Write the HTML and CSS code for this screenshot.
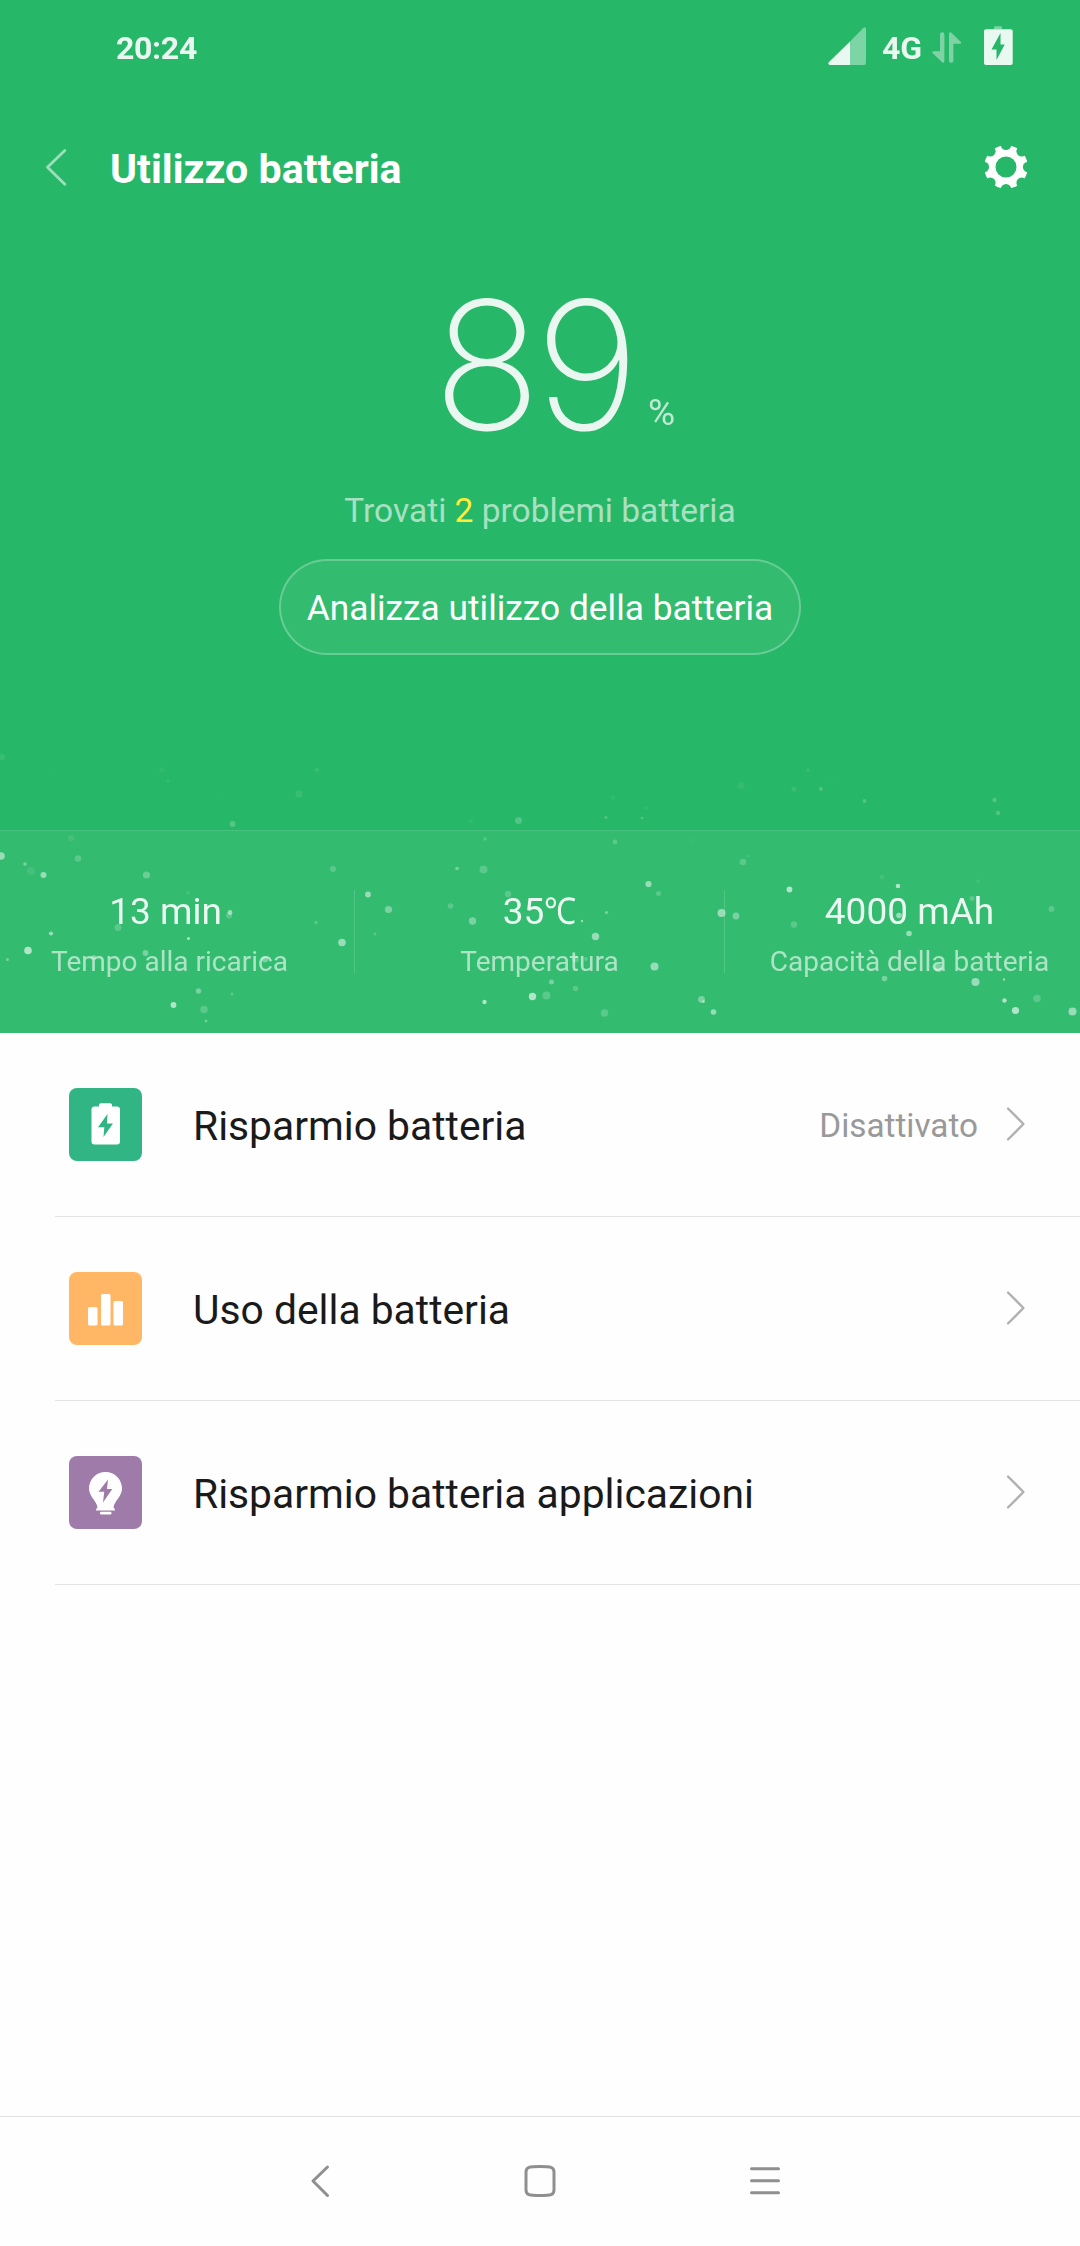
FILE: index.html
```html
<!DOCTYPE html>
<html lang="it">
<head>
<meta charset="utf-8">
<title>Utilizzo batteria</title>
<link rel="stylesheet" href="styles.css">
</head>
<body>
<div class="screen">
  <section class="top">
    <svg class="particles" viewBox="0 740 1080 293" fill="#fff" aria-hidden="true">
      <g opacity=".09">
        <circle cx="2" cy="757" r="3"/><circle cx="162" cy="770" r="3" opacity=".5"/><circle cx="168" cy="781" r="1.5"/><circle cx="317" cy="770" r="2"/><circle cx="299" cy="794" r="3.6"/><circle cx="71" cy="838" r="3"/><circle cx="31" cy="871" r="4"/><circle cx="188" cy="893" r="2"/>
        <circle cx="471" cy="821" r="2.2" opacity=".6"/><circle cx="613" cy="797.500" r="2.5" opacity=".6"/><circle cx="646" cy="808" r="2" opacity=".6"/><circle cx="693" cy="840" r="1.6" opacity=".6"/>
        <circle cx="741" cy="785.500" r="3.500" opacity=".7"/><circle cx="794" cy="789" r="2.600"/><circle cx="808" cy="770" r="1.800"/><circle cx="832" cy="777" r="1.500" opacity=".4"/><circle cx="748" cy="856" r="1.800"/><circle cx="882" cy="877" r="2.300"/><circle cx="978" cy="881" r="1.800"/><circle cx="52" cy="773" r="1.500" opacity=".3"/><circle cx="223" cy="799" r="1.500" opacity=".3"/>
      </g>
      <g opacity=".2">
        <circle cx="232.500" cy="824" r="3"/><circle cx="78" cy="858.500" r="3.200"/><circle cx="333" cy="869" r="3"/><circle cx="229" cy="915.500" r="3"/><circle cx="118" cy="927.500" r="3.500"/><circle cx="316" cy="922.500" r="1.700"/><circle cx="204" cy="1009.500" r="3.800"/><circle cx="518.500" cy="820.500" r="3.500"/><circle cx="485" cy="839" r="1.700"/><circle cx="483.500" cy="869.500" r="4"/><circle cx="508" cy="894" r="3.200"/><circle cx="606" cy="817.500" r="1.400"/><circle cx="642" cy="818" r="1.300"/><circle cx="615" cy="842" r="2.400"/><circle cx="658.500" cy="893.500" r="2.500"/><circle cx="546.500" cy="995.500" r="4"/><circle cx="575.500" cy="988.500" r="2.700"/><circle cx="604.500" cy="1013" r="3.700"/><circle cx="575.500" cy="959" r="3.500"/><circle cx="586" cy="959" r="2"/><circle cx="821" cy="789" r="1.900"/><circle cx="864.500" cy="801" r="2"/><circle cx="994.500" cy="800" r="2.200"/><circle cx="998" cy="813" r="2.200"/><circle cx="743" cy="862" r="3.300"/><circle cx="794" cy="924.500" r="3.200"/><circle cx="972" cy="898.500" r="2.500"/><circle cx="1051.500" cy="909" r="3"/><circle cx="1037" cy="998.500" r="3.700"/><circle cx="375" cy="934" r="1.500"/><circle cx="450.500" cy="906" r="2.800"/><circle cx="232" cy="994" r="1.500"/>
      </g>
      <g opacity=".35">
        <circle cx="25" cy="864" r="1.800"/><circle cx="146.500" cy="875" r="3.600" opacity=".8"/><circle cx="198.500" cy="991" r="2.700"/><circle cx="206" cy="1021" r="1.300"/><circle cx="7.500" cy="959.500" r="1.500"/><circle cx="145.500" cy="953" r="2.900"/><circle cx="94" cy="957" r="2"/><circle cx="265" cy="959.500" r="3"/><circle cx="388.500" cy="909.500" r="3.600"/><circle cx="457" cy="868.500" r="1.800"/><circle cx="472.500" cy="921" r="3.700"/><circle cx="606.500" cy="912.500" r="1.600"/><circle cx="551.500" cy="982" r="2.500"/><circle cx="701.500" cy="999.500" r="3.400"/><circle cx="884.500" cy="978.500" r="2.800"/><circle cx="736" cy="916" r="3.400"/><circle cx="938.500" cy="968" r="4"/>
      </g>
      <g opacity=".5">
        <circle cx="1" cy="856" r="3.800"/><circle cx="43.500" cy="875" r="3"/><circle cx="230" cy="912.500" r="2.400"/><circle cx="51" cy="933.500" r="2.100"/><circle cx="342" cy="942.500" r="3.800"/><circle cx="368" cy="894.500" r="2.900"/><circle cx="582" cy="921" r="1.200"/><circle cx="595.500" cy="936.500" r="3.700"/><circle cx="654.500" cy="966.500" r="4"/><circle cx="648.500" cy="884" r="3.100"/><circle cx="713.500" cy="1012" r="2.800"/><circle cx="703.500" cy="1001.500" r="1.300"/><circle cx="721.500" cy="913" r="4"/><circle cx="899" cy="915.500" r="2.800"/><circle cx="909" cy="933.500" r="2.800"/><circle cx="975.500" cy="982" r="4"/><circle cx="1004" cy="979.500" r="1.200"/><circle cx="1072.500" cy="1011.500" r="4"/>
      </g>
      <g opacity=".62">
        <circle cx="28" cy="950.500" r="3.800"/><circle cx="188.500" cy="938.500" r="1.500"/><circle cx="173.500" cy="1005" r="2.900"/><circle cx="532.500" cy="996.500" r="3.700"/><circle cx="484.500" cy="1002" r="2.200"/><circle cx="789.500" cy="889.500" r="2.900"/><circle cx="898" cy="886" r="2.300"/><circle cx="1004.500" cy="1000.500" r="2.200"/><circle cx="1015.500" cy="1010.500" r="3.600"/>
      </g>
    </svg>

    <div class="status">
      <span class="time">20:24</span>
      <div class="status-icons">
        <svg width="38" height="98" viewBox="828 0 38 98" fill="#fff">
          <path opacity=".4" d="M850 41.500 863 28.200Q866 26 866 29V62.500Q866 65 864 65H850z"/>
          <path opacity=".9" d="M850 41.500V65H830Q827.300 64.200 829 62z"/>
        </svg>
        <span class="net">4G</span>
        <svg width="30" height="98" viewBox="932 0 30 98" fill="#fff" opacity=".4">
          <path d="M940 34.500a2.200 2.200 0 0 1 4.400 0V61q-.2 2.500-2 1.500L932.500 53q-.8-1.800 1.200-1.800H940z"/>
          <path d="M953.400 60.500a2.200 2.200 0 0 1-4.400 0V34q.2-2.500 2-1.500l9.900 9.500q.8 1.800-1.200 1.800h-6.300z"/>
        </svg>
        <svg class="charge" width="29" height="98" viewBox="984 0 29 98" fill="#fff">
          <path opacity=".4" d="M994 29V27.500Q994 26.200 995.500 26.200H1000.500Q1002 26.200 1002 27.500V29z"/>
          <path opacity=".9" fill-rule="evenodd" d="M986 29.200H1010.700Q1012.700 29.200 1012.700 31V63Q1012.700 65 1010.700 65H986Q984 65 984 63V31Q984 29.200 986 29.200zM1000.500 33 991.500 49.600H996.500V60L1004.700 44.600H1000.500z"/>
        </svg>
      </div>
    </div>

    <header class="header">
      <svg class="back" width="22" height="40" viewBox="45 147 22 40" fill="none" stroke="#fff" stroke-width="2.800" stroke-linecap="round" stroke-linejoin="round"><path d="M64.800 150.500 47.500 167.300l17.300 17"/></svg>
      <h1 class="title">Utilizzo batteria</h1>
      <svg width="44" height="44" viewBox="-22 -22 44 44">
        <defs><mask id="teeth">
          <circle r="22" fill="#fff"/><circle r="10.500"/>
          <circle cy="-22.200" r="5.300"/><circle cy="22.200" r="5.300"/><circle cx="22.200" r="5.300"/><circle cx="-22.200" r="5.300"/>
          <circle cx="15.700" cy="15.700" r="5.300"/><circle cx="-15.700" cy="15.700" r="5.300"/><circle cx="15.700" cy="-15.700" r="5.300"/><circle cx="-15.700" cy="-15.700" r="5.300"/>
        </mask></defs>
        <circle r="22" fill="#fff" mask="url(#teeth)"/>
      </svg>
    </header>

    <div class="hero">
      <div class="level"><span class="level-value">89</span><span class="level-unit">%</span></div>
      <p class="found">Trovati <b>2</b> problemi batteria</p>
      <button class="analyze">Analizza utilizzo della batteria</button>
    </div>

    <div class="stats">
      <div class="stat"><span class="stat-value">13 min</span><span class="stat-label">Tempo alla ricarica</span></div>
      <div class="stat"><span class="stat-value">35<span class="deg">℃</span></span><span class="stat-label">Temperatura</span></div>
      <div class="stat"><span class="stat-value">4000 mAh</span><span class="stat-label">Capacità della batteria</span></div>
    </div>
  </section>

  <main class="list">
    <div class="row">
      <svg class="icon green" viewBox="69 1088 73 73" fill="#fff"><path fill-rule="evenodd" d="M94.500 1106.500H99V1105q0-1.800 1.800-1.800h9.400q1.800 0 1.800 1.800v1.500h4.800q3.200 0 3.200 3v32q0 3-3 3H94.500q-3 0-3-3v-32q0-3 3-3zM107.500 1114 98 1127.200h6.300L103.500 1137 113 1123.600h-6z"/></svg>
      <span class="label">Risparmio batteria</span>
      <span class="value">Disattivato</span>
      <svg class="chevron" viewBox="1006 1105 20 38"><path d="M1008 1108.500 1023.400 1124 1008 1139.500"/></svg>
    </div>
    <div class="row">
      <svg class="icon orange" viewBox="69 1272 73 73" fill="#fff"><rect x="88" y="1307" width="9.500" height="18.500" rx="1.500"/><rect x="101" y="1294" width="9.500" height="31.500" rx="1.500"/><rect x="113.500" y="1301" width="9.500" height="24.500" rx="1.500"/></svg>
      <span class="label">Uso della batteria</span>
      <svg class="chevron" viewBox="1006 1105 20 38"><path d="M1008 1108.500 1023.400 1124 1008 1139.500"/></svg>
    </div>
    <div class="row">
      <svg class="icon purple" viewBox="69 1456 73 73" fill="#fff"><path fill-rule="evenodd" d="M105.500 1472c9.500 0 16.500 7.500 16.500 16.500 0 8-7.500 12-8.500 19q1.500 1.200 1.500 3H96q0-1.800 1.500-3c-1-7-8.500-11-8.500-19 0-9 7-16.500 16.500-16.500zM108 1479.500 98.500 1491.700h5.700L103 1502.500 112.300 1489h-5.300z"/><rect x="100" y="1511.800" width="11.500" height="2.800" rx="1.400"/></svg>
      <span class="label">Risparmio batteria applicazioni</span>
      <svg class="chevron" viewBox="1006 1105 20 38"><path d="M1008 1108.500 1023.400 1124 1008 1139.500"/></svg>
    </div>
  </main>

  <nav class="nav">
    <svg viewBox="310 2161 20 40"><path d="M327.500 2167 313 2181l14.500 14.500"/></svg>
    <svg viewBox="522 2161 36 40"><path d="M540 2166.500c11 0 14 .5 14 5.500v18c0 5-3 5.500-14 5.500s-14-.5-14-5.500v-18c0-5 3-5.500 14-5.500z"/></svg>
    <svg viewBox="748 2161 34 40"><path d="M751.500 2168.700h27M751.500 2180.700h27M751.500 2192.700h27"/></svg>
  </nav>
</div>
</body>
</html>
```
FILE: styles.css
```css
* { box-sizing: border-box; }
body {
  margin: 0;
  background: #fefefe;
  font-family: Roboto, "Noto Sans", "Noto Sans CJK SC", sans-serif;
  color: #1a1a1a;
}
svg { display: block; flex: none; }
.screen { display: flex; flex-direction: column; width: 1080px; height: 2246px; }

.top { position: relative; height: 1033px; background: #27b768; color: #fff; }
.particles { position: absolute; left: 0; bottom: 0; width: 1080px; height: 293px; }

.status { display: flex; align-items: center; justify-content: space-between; height: 98px; padding: 0 67px 0 116px; font-size: 32px; font-weight: 700; }
.time, .net { opacity: .9; padding-bottom: 2px; }
.time { letter-spacing: -.3px; }
.status-icons { display: flex; align-items: center; }
.net { width: 40px; margin: 0 10px 0 16px; }
.charge { margin-left: 22px; }

.header { display: flex; align-items: center; height: 138px; padding: 0 52px 0 45px; }
.back { opacity: .55; }
.title { flex: 1; margin: 0; padding: 4px 0 0 43px; font-size: 41.100px; font-weight: 700; }

.hero { display: flex; flex-direction: column; align-items: center; height: 594px; padding-top: 40px; }
.level { display: grid; grid-template-columns: 1fr 196px 1fr; align-items: end; width: 100%; height: 182px; }
.level-value { grid-column: 2; margin-left: -9px; padding-bottom: 3px; font-family: Inter, Roboto, sans-serif; font-size: 179px; font-weight: 200; line-height: 179px; letter-spacing: -6px; opacity: .9; }
.level-unit { margin: 0 0 25px 10px; font-size: 37px; line-height: 40px; opacity: .7; }
.found { margin: 32px 0 28px; font-size: 33.500px; line-height: 41px; color: rgba(255, 255, 255, .6); }
.found b { font-weight: 400; color: #ffee38; }
.analyze { width: 522px; height: 96px; padding: 2px 0 0; border: 2px solid rgba(255, 255, 255, .3); border-radius: 48px; background: rgba(255, 255, 255, .06); background-clip: padding-box; color: #fff; font: 400 35.300px Roboto, sans-serif; white-space: nowrap; }

.stats { display: grid; grid-template-columns: 354px 370px 356px; height: 203px; padding-top: 59px; border-top: 1px solid rgba(255, 255, 255, .1); background: rgba(255, 255, 255, .06); }
.stat { display: flex; flex-direction: column; align-items: center; height: 83px; white-space: nowrap; }
.stat + .stat { border-left: 1px solid rgba(255, 255, 255, .15); }
.stat:first-child { padding-right: 15px; }
.stat:first-child .stat-value { margin-right: 8px; }
.stat:last-child { padding-left: 14px; }
.stat-value { font-size: 37px; line-height: 43px; opacity: .9; }
.stat-label { margin-top: 17px; font-size: 28px; line-height: 24px; opacity: .6; }
.deg { display: inline-block; width: 32px; line-height: 1; transform: scaleX(.87); transform-origin: left; }

.list { flex: 1; }
.row { display: flex; align-items: center; height: 184px; margin-left: 55px; padding: 0 54px 0 14px; border-bottom: 1px solid #e3e3e3; }
.icon { width: 73px; height: 73px; border-radius: 8px; }
.green { background: #32b584; }
.orange { background: #ffb766; }
.purple { background: #9e7ba8; }
.label { flex: 1; padding: 3px 0 0 51px; font-size: 40.800px; }
.value { padding-top: 2px; margin-right: 28px; font-size: 33.300px; color: #999; }
.chevron { width: 20px; height: 38px; margin-bottom: 1px; fill: none; stroke: #b0b0b0; stroke-width: 2.4; stroke-linecap: round; stroke-linejoin: round; }

.nav { display: flex; align-items: center; height: 130px; padding: 0 0 1px 310px; border-top: 1px solid #e3e3e3; }
.nav svg { height: 40px; fill: none; stroke: #8f8f8f; stroke-width: 3; stroke-linecap: round; stroke-linejoin: round; }
.nav svg:nth-child(1) { width: 20px; }
.nav svg:nth-child(2) { width: 36px; margin: 0 190px 0 192px; }
.nav svg:nth-child(3) { width: 34px; }
```
